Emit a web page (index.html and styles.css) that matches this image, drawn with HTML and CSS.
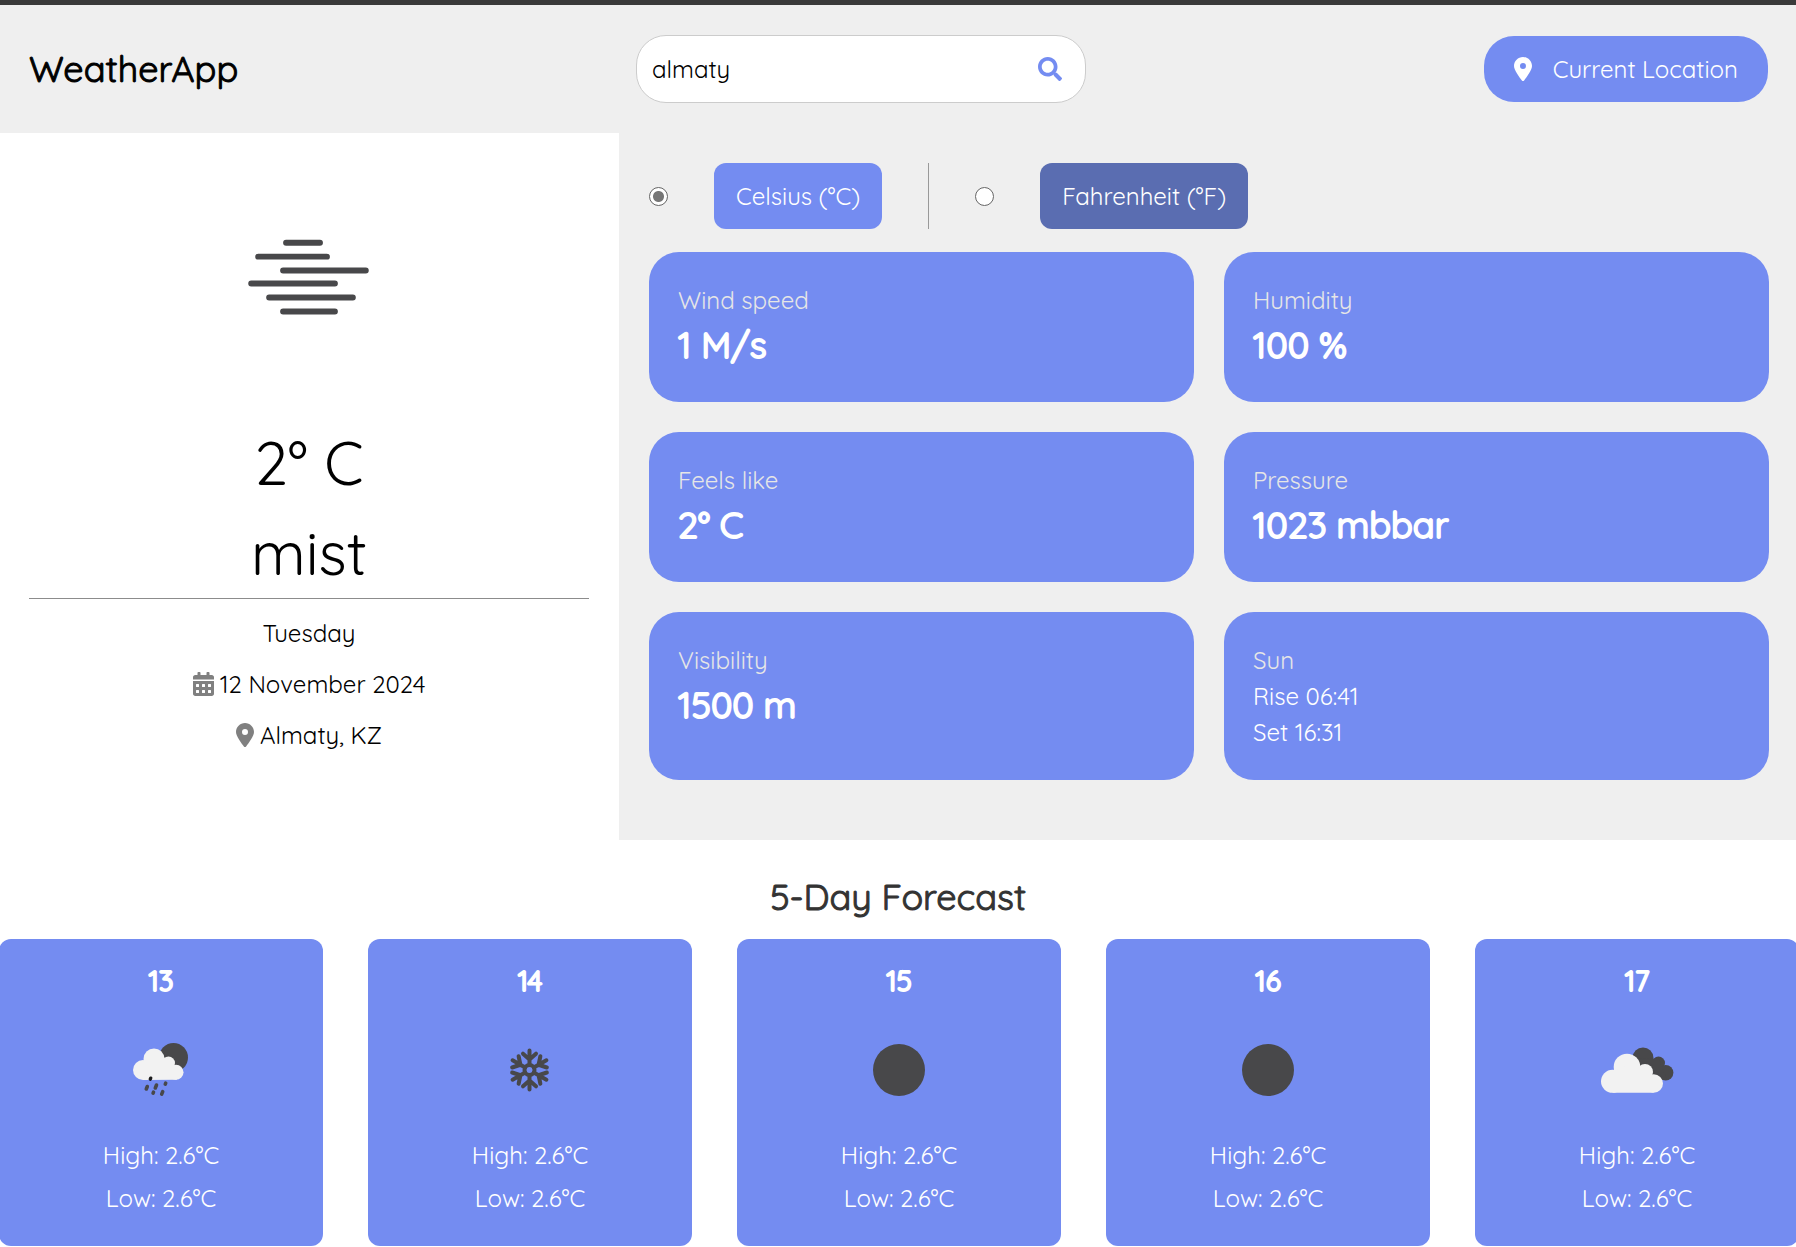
FILE: index.html
```html
<!DOCTYPE html>
<html lang="en">
<head>
<meta charset="utf-8">
<title>WeatherApp</title>
<link rel="stylesheet" href="styles.css">
</head>
<body>
<header class="topbar">
  <h1 class="brand">WeatherApp</h1>
  <form class="search" onsubmit="return false">
    <input class="search-input" type="text" value="almaty" aria-label="City">
    <button class="search-button" type="submit" aria-label="Search">
      <svg class="icon" viewBox="0 0 512 512"><path d="M505 442.700l-99.700-99.700c-4.500-4.500-10.600-7-17-7H372c27.600-35.300 44-79.700 44-128C416 93.100 322.900 0 208 0S0 93.100 0 208s93.100 208 208 208c48.300 0 92.700-16.400 128-44v16.300c0 6.400 2.500 12.500 7 17l99.700 99.700c9.400 9.400 24.600 9.400 33.900 0l28.300-28.300c9.400-9.400 9.400-24.600.1-34zM208 336c-70.700 0-128-57.200-128-128 0-70.700 57.200-128 128-128 70.700 0 128 57.200 128 128 0 70.700-57.200 128-128 128z"/></svg>
    </button>
  </form>
  <button class="location-button" type="button">
    <svg class="icon pin" viewBox="0 0 384 512"><path d="M215.700 499.200C267 435 384 279.400 384 192C384 86 298 0 192 0S0 86 0 192c0 87.400 117 243 168.300 307.200c12.300 15.300 35.100 15.300 47.400 0zM192 128a64 64 0 1 1 0 128 64 64 0 1 1 0-128z"/></svg>
    <span>Current Location</span>
  </button>
</header>

<main class="weather">
  <section class="today">
    <svg class="today-icon" viewBox="0 0 256 256" aria-label="mist">
      <g stroke="#48484a" stroke-width="6" stroke-linecap="round">
        <path d="M105 80h34M77 94h69M102 108h83M70 121h84M88 135h84M102 149h52"/>
      </g>
    </svg>
    <p class="today-main">2° C</p>
    <p class="today-main">mist</p>
    <hr class="rule">
    <p class="today-line">Tuesday</p>
    <p class="today-line"><svg class="icon calendar" viewBox="0 0 448 512"><path d="M0 464c0 26.500 21.500 48 48 48h352c26.500 0 48-21.500 48-48V192H0v272zm320-196c0-6.600 5.400-12 12-12h40c6.600 0 12 5.400 12 12v40c0 6.600-5.400 12-12 12h-40c-6.600 0-12-5.400-12-12v-40zm0 128c0-6.600 5.400-12 12-12h40c6.600 0 12 5.400 12 12v40c0 6.600-5.400 12-12 12h-40c-6.600 0-12-5.400-12-12v-40zM192 268c0-6.600 5.400-12 12-12h40c6.600 0 12 5.400 12 12v40c0 6.600-5.400 12-12 12h-40c-6.600 0-12-5.400-12-12v-40zm0 128c0-6.600 5.400-12 12-12h40c6.600 0 12 5.400 12 12v40c0 6.600-5.400 12-12 12h-40c-6.600 0-12-5.400-12-12v-40zM64 268c0-6.600 5.400-12 12-12h40c6.600 0 12 5.400 12 12v40c0 6.600-5.400 12-12 12H76c-6.600 0-12-5.400-12-12v-40zm0 128c0-6.600 5.400-12 12-12h40c6.600 0 12 5.400 12 12v40c0 6.600-5.400 12-12 12H76c-6.600 0-12-5.400-12-12v-40zM400 64h-48V16c0-8.800-7.200-16-16-16h-32c-8.800 0-16 7.200-16 16v48H160V16c0-8.800-7.200-16-16-16h-32c-8.800 0-16 7.200-16 16v48H48C21.500 64 0 85.500 0 112v48h448v-48c0-26.500-21.500-48-48-48z"/></svg><span>12 November 2024</span></p>
    <p class="today-line"><svg class="icon pin" viewBox="0 0 384 512"><path d="M215.700 499.200C267 435 384 279.400 384 192C384 86 298 0 192 0S0 86 0 192c0 87.400 117 243 168.300 307.200c12.300 15.300 35.100 15.300 47.400 0zM192 128a64 64 0 1 1 0 128 64 64 0 1 1 0-128z"/></svg><span>Almaty, KZ</span></p>
  </section>

  <section class="details">
    <div class="units">
      <input class="unit-radio" type="radio" name="unit" id="celsius" checked>
      <label class="unit-label" for="celsius">Celsius (°C)</label>
      <span class="unit-divider"></span>
      <input class="unit-radio" type="radio" name="unit" id="fahrenheit">
      <label class="unit-label unit-label-alt" for="fahrenheit">Fahrenheit (°F)</label>
    </div>
    <div class="cards">
      <article class="card"><h2 class="card-title">Wind speed</h2><p class="card-value">1 M/s</p></article>
      <article class="card"><h2 class="card-title">Humidity</h2><p class="card-value">100 %</p></article>
      <article class="card"><h2 class="card-title">Feels like</h2><p class="card-value">2° C</p></article>
      <article class="card"><h2 class="card-title">Pressure</h2><p class="card-value">1023 mbbar</p></article>
      <article class="card"><h2 class="card-title">Visibility</h2><p class="card-value">1500 m</p></article>
      <article class="card"><h2 class="card-title">Sun</h2><p>Rise 06:41</p><p>Set 16:31</p></article>
    </div>
  </section>
</main>

<section class="forecast">
  <h2 class="forecast-title">5-Day Forecast</h2>
  <div class="days">
    <article class="day">
      <h3 class="day-date">13</h3>
      <svg class="day-icon" viewBox="0 0 120 119">
        <circle cx="72.500" cy="46.500" r="14.500" fill="#48484a"/>
        <g fill="#f2f2f2">
          <circle cx="42" cy="59" r="10"/>
          <circle cx="53" cy="48" r="10.500"/>
          <circle cx="67.500" cy="52" r="6.500"/>
          <circle cx="75" cy="61.300" r="7.500"/>
          <path d="M42 69V52l11-8 16 4 7 20.800z"/>
        </g>
        <path stroke="#48484a" stroke-width="3.600" stroke-linecap="round" d="M46.300 75.500l-1 2.500M55.500 74l-1.200 3M64.700 72.200l-.4 1M52.500 81.200l-.4 1M61.700 80.700l-1 2.500"/>
        <path stroke="#1c1c1d" stroke-width="3.400" stroke-linecap="round" d="M49.700 67.200l-.4 1"/>
      </svg>
      <p class="day-temp">High: 2.6°C</p>
      <p class="day-temp">Low: 2.6°C</p>
    </article>
    <article class="day">
      <h3 class="day-date">14</h3>
      <svg class="day-icon" viewBox="0 0 120 119">
        <defs><path id="flake-arm" d="M0-5v-14.500M0-10.500l-6.500-5.800M0-10.500l6.500-5.800"/></defs>
        <g transform="translate(59.500 59)" fill="none" stroke="#48484a" stroke-width="4" stroke-linecap="round">
          <circle r="5"/>
          <use href="#flake-arm"/>
          <use href="#flake-arm" transform="rotate(60)"/>
          <use href="#flake-arm" transform="rotate(120)"/>
          <use href="#flake-arm" transform="rotate(180)"/>
          <use href="#flake-arm" transform="rotate(240)"/>
          <use href="#flake-arm" transform="rotate(300)"/>
        </g>
      </svg>
      <p class="day-temp">High: 2.6°C</p>
      <p class="day-temp">Low: 2.6°C</p>
    </article>
    <article class="day">
      <h3 class="day-date">15</h3>
      <svg class="day-icon" viewBox="0 0 120 119"><circle cx="60" cy="59" r="26" fill="#48484a"/></svg>
      <p class="day-temp">High: 2.6°C</p>
      <p class="day-temp">Low: 2.6°C</p>
    </article>
    <article class="day">
      <h3 class="day-date">16</h3>
      <svg class="day-icon" viewBox="0 0 120 119"><circle cx="60" cy="59" r="26" fill="#48484a"/></svg>
      <p class="day-temp">High: 2.6°C</p>
      <p class="day-temp">Low: 2.6°C</p>
    </article>
    <article class="day">
      <h3 class="day-date">17</h3>
      <svg class="day-icon" viewBox="0 0 120 119">
        <g fill="#48484a">
          <circle cx="66" cy="47" r="10.500"/>
          <circle cx="81.500" cy="52" r="6.500"/>
          <circle cx="88.700" cy="61.700" r="7.700"/>
          <path d="M60 47l22 1 8 21H66z"/>
        </g>
        <g fill="#f2f2f2">
          <circle cx="35.500" cy="70.300" r="11.500"/>
          <circle cx="50" cy="56" r="13.300"/>
          <circle cx="68" cy="61" r="8"/>
          <circle cx="76.700" cy="72.500" r="9.300"/>
          <path d="M35.500 81.800V61L50 54l20 4 6.700 23.800z"/>
        </g>
      </svg>
      <p class="day-temp">High: 2.6°C</p>
      <p class="day-temp">Low: 2.6°C</p>
    </article>
  </div>
</section>
</body>
</html>
```
FILE: styles.css
```css
* { box-sizing: border-box; margin: 0; padding: 0; }

body {
  background: #fff;
  color: #000;
  font: 24px/36px Quicksand, Lato, sans-serif;
  overflow-x: hidden;
}

button, input { font: inherit; color: inherit; border: 0; background: none; }

.icon { height: 24px; fill: currentColor; flex: none; }

.topbar {
  display: flex;
  align-items: center;
  justify-content: space-between;
  height: 133px;
  padding: 0 28px 0 29px;
  border-top: 5px solid #3a3a3a;
  background: #efefef;
}
.brand {
  font-size: 36px;
  line-height: 54px;
  font-weight: 400;
  -webkit-text-stroke: 1px currentColor;
}
.search {
  display: flex;
  align-items: center;
  width: 450px;
  height: 68px;
  padding: 0 23px 0 15px;
  border: 1px solid #ccc;
  border-radius: 30px;
  background: #fff;
}
.search-input { flex: 1; min-width: 0; outline: 0; }
.search-button { display: flex; color: #748cf1; }
.location-button {
  display: flex;
  align-items: center;
  gap: 21px;
  padding: 15px 30px;
  border-radius: 30px;
  background: #748cf1;
  color: #fff;
}

.weather { display: flex; background: #efefef; }
.today {
  flex: 0 0 619px;
  padding: 30px 30px 60px 29px;
  background: #fff;
  text-align: center;
}
.today-icon { display: block; width: 256px; height: 255px; margin: 0 auto; }
.today-main { font-size: 60px; line-height: 90px; font-weight: 400; }
.rule { height: 2px; border: 0; border-top: 1px solid #8c8c8c; margin-bottom: 15px; }
.today-line {
  display: flex;
  align-items: center;
  justify-content: center;
  gap: 6px;
  margin-bottom: 15px;
}
.today-line .icon { color: #808080; }

.details { flex: 1; min-width: 0; padding: 30px 27px 60px 30px; }
.units { display: flex; align-items: center; gap: 46px; margin-bottom: 23px; }
.unit-radio {
  appearance: none;
  width: 19px;
  height: 19px;
  border: 1px solid #666;
  border-radius: 50%;
  background: #fff;
}
.unit-radio:checked { background: radial-gradient(circle, #767676 5px, #fff 6px); }
.unit-label {
  padding: 15px 22px;
  border-radius: 12px;
  background: #748cf1;
  color: #fff;
}
.unit-label-alt { background: #5a6db1; }
.unit-divider { width: 1px; align-self: stretch; background: #999; }

.cards { display: grid; grid-template-columns: 1fr 1fr; gap: 30px; }
.card { padding: 30px 29px; border-radius: 30px; background: #748cf1; color: #fff; }
.card-title { font-size: 24px; font-weight: 400; color: #e6e6e6; }
.card-value {
  font-size: 36px;
  line-height: 54px;
  font-weight: 400;
  -webkit-text-stroke: 2px currentColor;
}

.forecast { padding-top: 30px; overflow: hidden; }
.forecast-title {
  margin-bottom: 15px;
  color: #333;
  font-size: 36px;
  line-height: 54px;
  font-weight: 400;
  -webkit-text-stroke: 1px currentColor;
  text-align: center;
}
.days { display: grid; grid-template-columns: repeat(5, 1fr); gap: 45px; margin: 0 -3px 0 -1px; }
.day {
  padding: 23px;
  border-radius: 12px;
  background: #748cf1;
  color: #fff;
  text-align: center;
}
.day-date {
  font-size: 28px;
  line-height: 38px;
  font-weight: 400;
  -webkit-text-stroke: 2px currentColor;
  margin-bottom: 11px;
}
.day-icon { display: block; width: 120px; height: 119px; margin: 0 auto 7px; }
.day-temp { margin-bottom: 7px; }
```
